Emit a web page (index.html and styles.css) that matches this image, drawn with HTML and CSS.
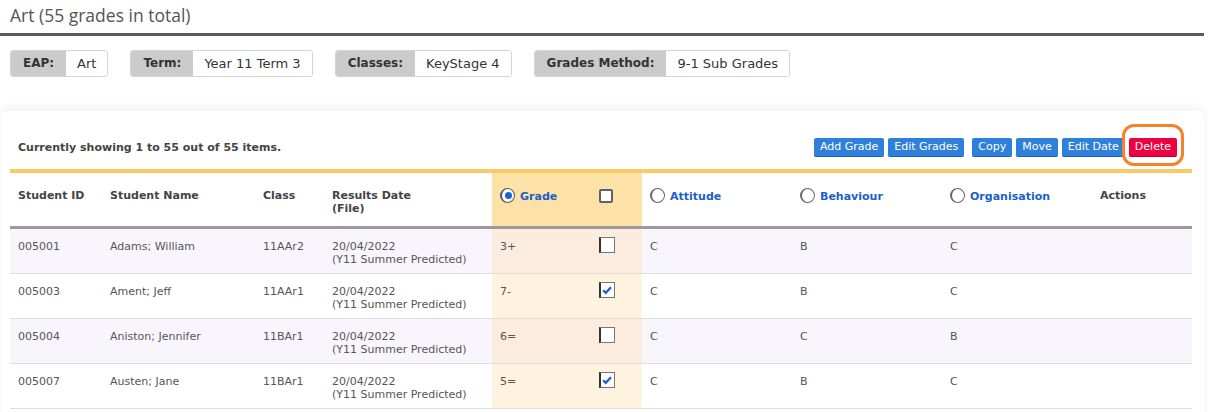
FILE: index.html
```html
<!DOCTYPE html>
<html lang="en">

<head>
    <meta charset="UTF-8">
    <meta name="viewport" content="width=device-width, initial-scale=1.0">
    <title>Art grades</title>

    <link rel="stylesheet" href="styles.css">
</head>

<body>
    <div class="page-title">
        <h1>Art (55 grades in total)</h1>
    </div>

    <div class="filters">
        <div class="chip"><span class="chip-label">EAP:</span><span class="chip-value">Art</span></div>
        <div class="chip"><span class="chip-label">Term:</span><span class="chip-value">Year 11 Term 3</span></div>
        <div class="chip"><span class="chip-label">Classes:</span><span class="chip-value">KeyStage 4</span></div>
        <div class="chip"><span class="chip-label">Grades Method:</span><span class="chip-value">9-1 Sub Grades</span></div>
    </div>

    <div class="card">
        <div class="toolbar">
            <div class="summary">Currently showing 1 to 55 out of 55 items.</div>

            <div class="actions">
                <div class="btn-group">
                    <button class="btn">Add Grade</button>
                    <button class="btn">Edit Grades</button>
                </div>
                <div class="btn-group">
                    <button class="btn">Copy</button>
                    <button class="btn">Move</button>
                    <button class="btn">Edit Date</button>
                    <span class="highlight-wrap">
                        <button class="btn btn-danger">Delete</button>
                        <span class="highlight-ring"></span>
                    </span>
                </div>
            </div>
        </div>

        <table class="grades-table">
            <colgroup>
                <col style="width: 92px">
                <col style="width: 153px">
                <col style="width: 69px">
                <col style="width: 168px">
                <col style="width: 99px">
                <col style="width: 51px">
                <col style="width: 150px">
                <col style="width: 150px">
                <col style="width: 150px">
                <col style="width: 100px">
            </colgroup>
            <thead>
                <tr>
                    <th>Student ID</th>
                    <th>Student Name</th>
                    <th>Class</th>
                    <th>Results Date<br>(File)</th>
                    <th class="grade-col"><span class="radio checked"></span><a class="sort-link">Grade</a></th>
                    <th class="grade-col check-cell"><span class="checkbox head"></span></th>
                    <th><span class="radio"></span><a class="sort-link">Attitude</a></th>
                    <th><span class="radio"></span><a class="sort-link">Behaviour</a></th>
                    <th><span class="radio"></span><a class="sort-link">Organisation</a></th>
                    <th>Actions</th>
                </tr>
            </thead>
            <tbody>
                <tr>
                    <td>005001</td>
                    <td>Adams; William</td>
                    <td>11AAr2</td>
                    <td>20/04/2022<br>(Y11 Summer Predicted)</td>
                    <td class="grade-col">3+</td>
                    <td class="grade-col check-cell"><span class="checkbox"></span></td>
                    <td>C</td>
                    <td>B</td>
                    <td>C</td>
                    <td></td>
                </tr>
                <tr>
                    <td>005003</td>
                    <td>Ament; Jeff</td>
                    <td>11AAr1</td>
                    <td>20/04/2022<br>(Y11 Summer Predicted)</td>
                    <td class="grade-col">7-</td>
                    <td class="grade-col check-cell"><span class="checkbox"><svg viewBox="0 0 12 12"><path d="M2.2 6.2 L4.8 8.8 L10 3.2" /></svg></span></td>
                    <td>C</td>
                    <td>B</td>
                    <td>C</td>
                    <td></td>
                </tr>
                <tr>
                    <td>005004</td>
                    <td>Aniston; Jennifer</td>
                    <td>11BAr1</td>
                    <td>20/04/2022<br>(Y11 Summer Predicted)</td>
                    <td class="grade-col">6=</td>
                    <td class="grade-col check-cell"><span class="checkbox"></span></td>
                    <td>C</td>
                    <td>C</td>
                    <td>B</td>
                    <td></td>
                </tr>
                <tr>
                    <td>005007</td>
                    <td>Austen; Jane</td>
                    <td>11BAr1</td>
                    <td>20/04/2022<br>(Y11 Summer Predicted)</td>
                    <td class="grade-col">5=</td>
                    <td class="grade-col check-cell"><span class="checkbox"><svg viewBox="0 0 12 12"><path d="M2.2 6.2 L4.8 8.8 L10 3.2" /></svg></span></td>
                    <td>C</td>
                    <td>B</td>
                    <td>C</td>
                    <td></td>
                </tr>
            </tbody>
        </table>
    </div>
</body>

</html>
```

FILE: styles.css
```css
body {
    margin: 0;
    background-color: #fff;
    font-family: "DejaVu Sans", Verdana, sans-serif;
    color: #555;
    overflow: hidden;
}

.page-title {
    margin-right: 4px;
    border-bottom: 3px solid #595959;
}

.page-title h1 {
    margin: 0;
    padding: 3px 10px 0;
    height: 30px;
    font-family: "Open Sans", sans-serif;
    font-weight: normal;
    font-size: 17.5px;
    line-height: 25px;
    color: #555;
}

.filters {
    display: flex;
    gap: 22px;
    padding: 14px 10px 0;
    height: 27px;
}

.chip {
    display: flex;
    border: 1px solid #d4d4d4;
    border-radius: 3px;
    overflow: hidden;
    font-size: 13px;
    line-height: 25px;
}

.chip-label {
    background-color: #cbcbcb;
    color: #333;
    font-weight: bold;
    font-size: 12px;
    padding: 0 12px;
}

.chip-value {
    background-color: #fff;
    color: #333;
    padding: 0 11px;
}

.card {
    margin: 34px 4px 0 1px;
    padding: 0 12px 0 9px;
    background-color: #fff;
    border-radius: 6px;
    box-shadow: 0 -3px 10px rgba(0, 0, 0, 0.06);
    height: 320px;
}

.toolbar {
    display: flex;
    justify-content: space-between;
    align-items: center;
    padding: 27px 15px 12px 8px;
}

.summary {
    font-size: 11px;
    font-weight: bold;
    color: #444;
}

.actions {
    display: flex;
    gap: 8px;
}

.btn-group {
    display: flex;
    gap: 4px;
}

.btn {
    height: 19px;
    padding: 0 6px;
    border: none;
    border-bottom: 1px solid #1d5fae;
    border-radius: 2px;
    background-color: #2f80db;
    color: #fff;
    font-family: "DejaVu Sans", Verdana, sans-serif;
    font-size: 11px;
    line-height: 18px;
    cursor: pointer;
}

.btn-danger {
    background-color: #ec0040;
    border-bottom-color: #b3002f;
}

.highlight-wrap {
    position: relative;
    display: inline-flex;
}

.highlight-ring {
    position: absolute;
    left: -7px;
    top: -14px;
    width: 56px;
    height: 36px;
    border: 3px solid #f5822a;
    border-radius: 12px;
}

.grades-table {
    width: 1182px;
    table-layout: fixed;
    border-collapse: collapse;
    border-top: 4px solid #fcc966;
    font-size: 11px;
}

.grades-table th {
    text-align: left;
    vertical-align: top;
    font-weight: bold;
    color: #444;
    line-height: 13px;
    padding: 16px 8px 11px;
    border-bottom: 3px solid #9a9a9a;
    white-space: nowrap;
}

.grades-table td {
    vertical-align: top;
    line-height: 13px;
    padding: 11px 8px 7px;
    border-bottom: 1px solid #dedede;
    height: 26px;
}

.grades-table tbody tr:nth-child(odd) td {
    background-color: #f9f5fd;
}

.grades-table th.grade-col {
    background-color: #fde2a8;
}

.grades-table tbody tr:nth-child(odd) td.grade-col {
    background-color: #fbecdf;
}

.grades-table tbody tr:nth-child(even) td.grade-col {
    background-color: #fef3de;
}

.grades-table .grade-col:first-of-type {
    padding-left: 7px;
}

.check-cell {
    padding-left: 8px;
}

.sort-link {
    color: #1b5fc8;
    text-decoration: none;
    vertical-align: middle;
}

.radio {
    display: inline-block;
    box-sizing: border-box;
    width: 15px;
    height: 15px;
    margin-right: 5px;
    border: 1px solid #666;
    border-left-width: 2px;
    border-radius: 50%;
    background-color: #fff;
    vertical-align: middle;
    position: relative;
    top: -1px;
}

.radio.checked {
    border-color: #555;
}

.radio.checked::after {
    content: "";
    position: absolute;
    left: 2.5px;
    top: 3px;
    width: 7px;
    height: 7px;
    border-radius: 50%;
    background-color: #1a66d4;
}

.checkbox {
    display: inline-block;
    box-sizing: border-box;
    width: 16px;
    height: 16px;
    border: 1px solid #777;
    border-left: 2px solid #333;
    background-color: #fff;
    margin-top: -3px;
    vertical-align: top;
}

.checkbox.head {
    width: 14px;
    height: 14px;
    border: 2px solid #5b6170;
    border-radius: 2px;
    margin-top: 0;
}

.checkbox svg {
    display: block;
    width: 12px;
    height: 12px;
    margin: 1px 0 0 0;
    fill: none;
    stroke: #1a5fc8;
    stroke-width: 2.2;
}
```
